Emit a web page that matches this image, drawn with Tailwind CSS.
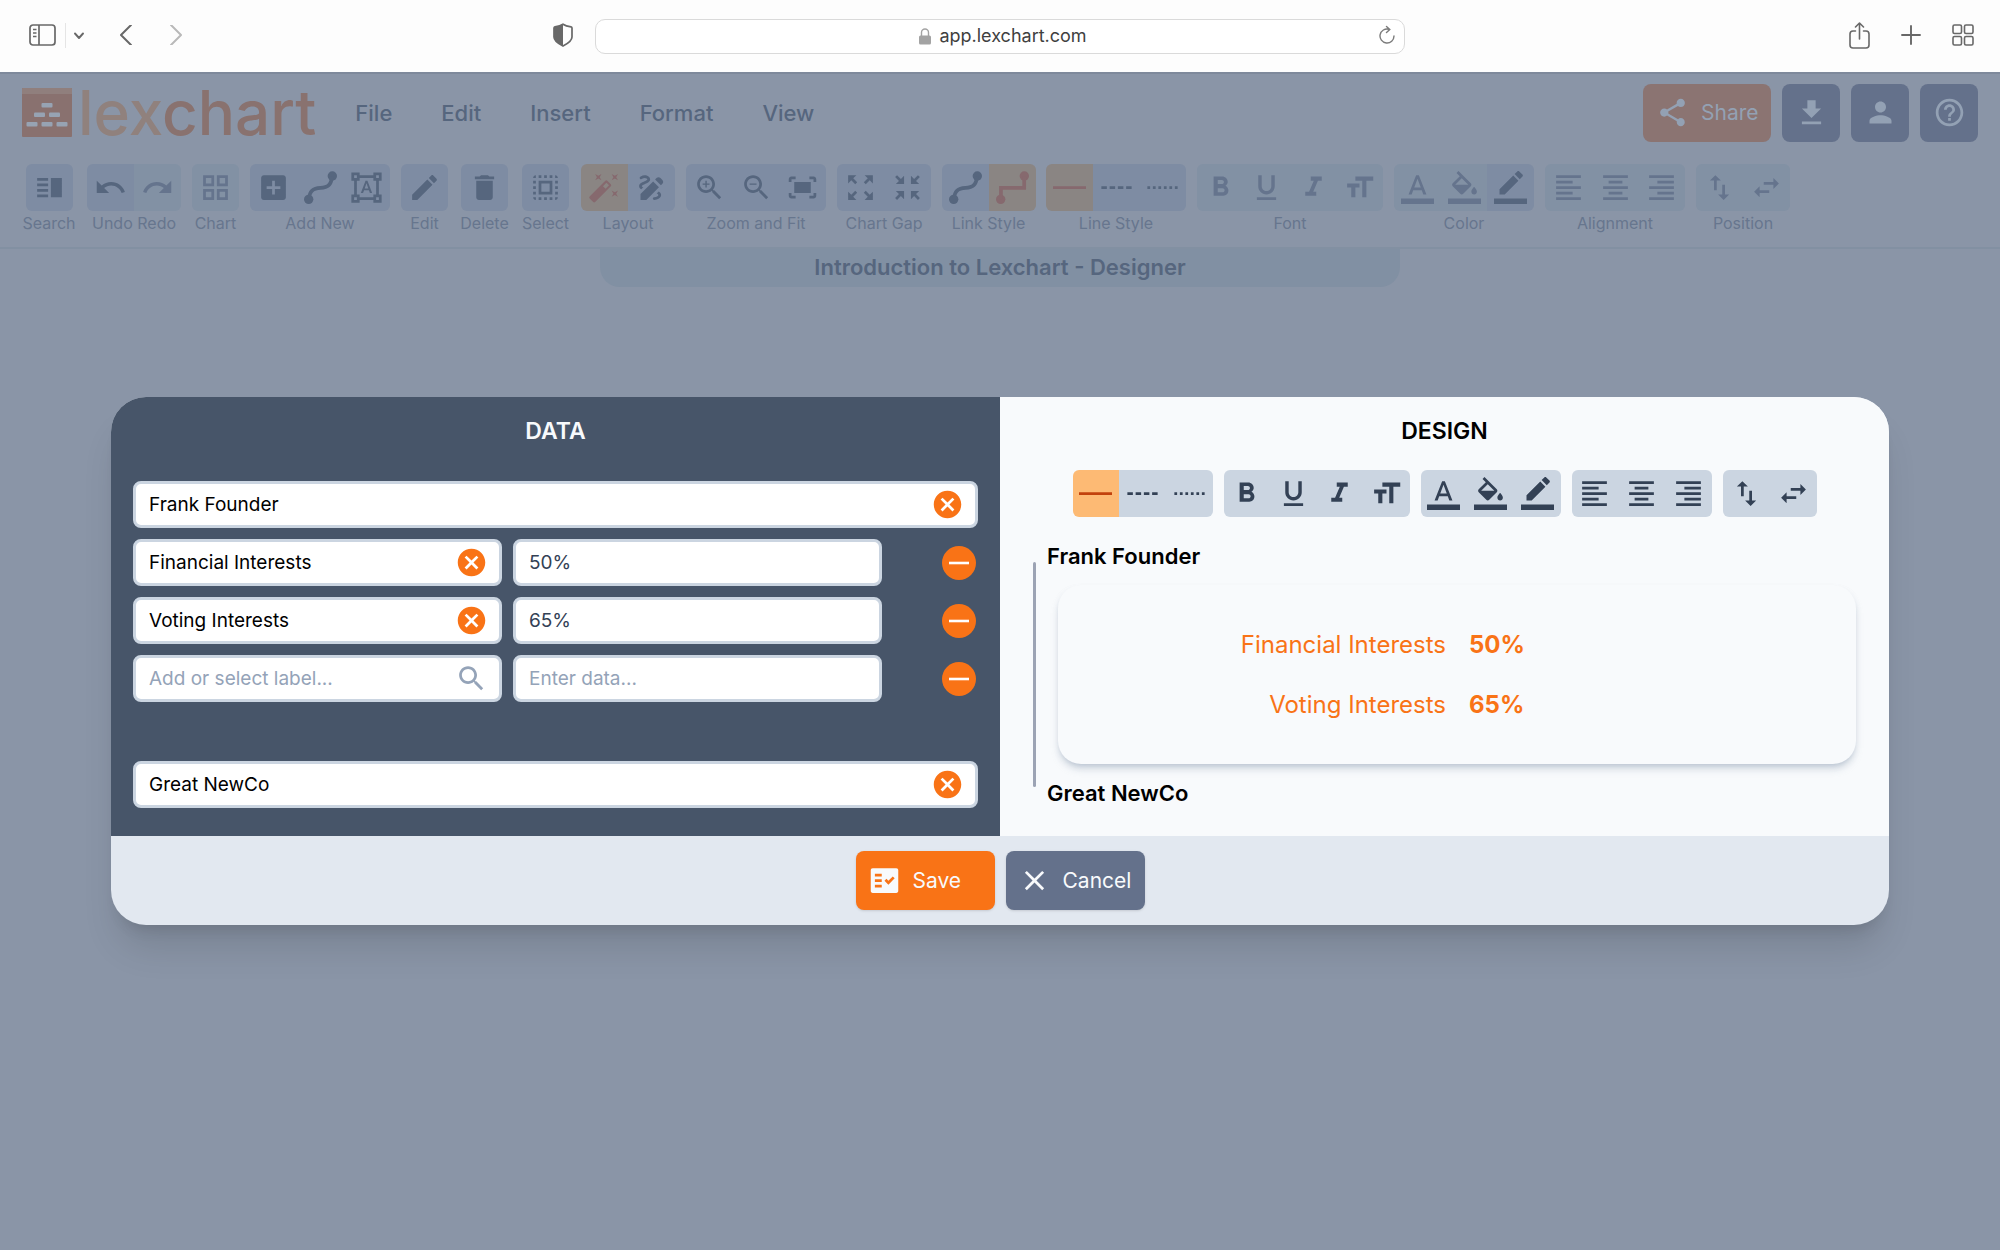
<!DOCTYPE html>
<html lang="en">
<head>
<meta charset="utf-8">
<meta name="viewport" content="width=device-width, initial-scale=1">
<title>Lexchart</title>
<script src="https://cdn.jsdelivr.net/npm/@tailwindcss/browser@4"></script>
</head>
<body class="flex min-h-screen flex-col bg-[#8a95a7] font-['Inter',sans-serif] text-black">

<!-- Icon set -->
<svg class="hidden" aria-hidden="true">
  <symbol id="i-search" viewBox="0 0 24 24"><path d="M3 15h8v-2H3v2zm0 4h8v-2H3v2zm0-8h8V9H3v2zm0-6v2h8V5H3zm10 0h8v14h-8V5z"/></symbol>
  <symbol id="i-undo" viewBox="0 0 24 24"><path d="M12.5 8c-2.65 0-5.05.99-6.9 2.6L2 7v9h9l-3.62-3.62c1.39-1.16 3.16-1.88 5.12-1.88 3.54 0 6.55 2.31 7.6 5.5l2.37-.78C21.08 11.03 17.15 8 12.5 8z"/></symbol>
  <symbol id="i-redo" viewBox="0 0 24 24"><path d="M18.4 10.6C16.55 8.99 14.15 8 11.5 8c-4.65 0-8.58 3.03-9.96 7.22L3.9 16c1.05-3.19 4.05-5.5 7.6-5.5 1.95 0 3.73.72 5.12 1.88L13 16h9V7l-3.6 3.6z"/></symbol>
  <symbol id="i-grid" viewBox="0 0 24 24"><path d="M3 3v8h8V3H3zm6 6H5V5h4v4zm-6 4v8h8v-8H3zm6 6H5v-4h4v4zm4-16v8h8V3h-8zm6 6h-4V5h4v4zm-6 4v8h8v-8h-8zm6 6h-4v-4h4v4z"/></symbol>
  <symbol id="i-addbox" viewBox="0 0 24 24"><path d="M19 3H5c-1.11 0-2 .9-2 2v14c0 1.1.89 2 2 2h14c1.1 0 2-.9 2-2V5c0-1.1-.9-2-2-2zm-2 10h-4v4h-2v-4H7v-2h4V7h2v4h4v2z"/></symbol>
  <symbol id="i-curve" viewBox="0 0 24 24"><circle cx="20.6" cy="3.6" r="3.4"/><circle cx="3.4" cy="20.6" r="3.4"/><path d="M3.6 20.5C4 14.5 6.5 12.6 12 12.3S19.8 10 20.4 4" fill="none" stroke="currentColor" stroke-width="2.7"/></symbol>
  <symbol id="i-elbow" viewBox="0 0 24 24"><circle cx="20.6" cy="3.6" r="3.4"/><circle cx="3.4" cy="20.6" r="3.4"/><path d="M3.6 20.5V12.2H20.5V4" fill="none" stroke="currentColor" stroke-width="2.7"/></symbol>
  <symbol id="i-shapes" viewBox="0 0 24 24"><path d="M23 7V1h-6v2H7V1H1v6h2v10H1v6h6v-2h10v2h6v-6h-2V7h2zM3 3h2v2H3V3zm2 18H3v-2h2v2zm12-2H7v-2H5V7h2V5h10v2h2v10h-2v2zm4 2h-2v-2h2v2zM19 5V3h2v2h-2zm-5.27 9h-3.49l-.73 2H7.89l3.4-9h1.4l3.41 9h-1.63l-.74-2zm-3.04-1.26h2.61L12 8.91l-1.31 3.83z"/></symbol>
  <symbol id="i-edit" viewBox="0 0 24 24"><path d="M3 17.25V21h3.75L17.81 9.94l-3.75-3.75L3 17.25zM20.71 7.04c.39-.39.39-1.02 0-1.41l-2.34-2.34c-.39-.39-1.02-.39-1.41 0l-1.83 1.83 3.75 3.75 1.83-1.83z"/></symbol>
  <symbol id="i-delete" viewBox="0 0 24 24"><path d="M6 19c0 1.1.9 2 2 2h8c1.1 0 2-.9 2-2V7H6v12zM19 4h-3.5l-1-1h-5l-1 1H5v2h14V4z"/></symbol>
  <symbol id="i-select" viewBox="0 0 24 24"><path d="M3 5h2V3c-1.1 0-2 .9-2 2zm0 8h2v-2H3v2zm4 8h2v-2H7v2zM3 9h2V7H3v2zm10-6h-2v2h2V3zm6 0v2h2c0-1.1-.9-2-2-2zM5 21v-2H3c0 1.1.9 2 2 2zm-2-4h2v-2H3v2zM9 3H7v2h2V3zm2 18h2v-2h-2v2zm8-8h2v-2h-2v2zm0 8c1.1 0 2-.9 2-2h-2v2zm0-12h2V7h-2v2zm0 8h2v-2h-2v2zm-4 4h2v-2h-2v2zm0-16h2V3h-2v2zM7 17h10V7H7v10zm2-8h6v6H9V9z"/></symbol>
  <symbol id="i-wand" viewBox="0 0 24 24"><path fill-rule="evenodd" d="M12.6 7.1a1 1 0 0 1 1.4 0l2.6 2.6a1 1 0 0 1 0 1.4L5.2 22.6a1 1 0 0 1-1.4 0L1.2 20a1 1 0 0 1 0-1.4zM13.4 8.5l-2.5 2.5 1.9 1.9 2.5-2.5z"/><path d="M5.2 2.2l2.3 1.3 2.3-1.3-1.3 2.3 1.3 2.3-2.3-1.3-2.3 1.3 1.3-2.3zM17.2 2.2l2.3 1.3 2.3-1.3-1.3 2.3 1.3 2.3-2.3-1.3-2.3 1.3 1.3-2.3zM17.2 14.2l2.3 1.3 2.3-1.3-1.3 2.3 1.3 2.3-2.3-1.3-2.3 1.3 1.3-2.3z"/></symbol>
  <symbol id="i-draw" viewBox="0 0 24 24"><path d="M18.85 10.39l1.06-1.06c.78-.78.78-2.05 0-2.83L18.5 5.09c-.78-.78-2.05-.78-2.83 0l-1.06 1.06 4.24 4.24zM13.19 7.56L4 16.76V21h4.24l9.19-9.19-4.24-4.25zM19 17.5c0 2.19-2.54 3.5-5 3.5-.55 0-1-.45-1-1s.45-1 1-1c1.54 0 3-.73 3-1.5 0-.47-.48-.87-1.23-1.2l1.48-1.48C18.32 15.45 19 16.29 19 17.5zM4.58 13.35C3.61 12.79 3 12.06 3 11c0-1.8 1.89-2.63 3.56-3.36C7.59 7.18 9 6.56 9 6c0-.41-.78-1-2-1-1.26 0-1.8.61-1.83.64-.35.41-.98.46-1.4.12-.41-.34-.49-.95-.15-1.38C3.73 4.24 4.76 3 7 3s4 1.32 4 3c0 1.87-1.93 2.72-3.64 3.47C6.42 9.88 5 10.5 5 11c0 .31.43.6 1.07.86l-1.49 1.49z"/></symbol>
  <symbol id="i-lens" viewBox="0 0 24 24"><path d="M15.5 14h-.79l-.28-.27C15.41 12.59 16 11.11 16 9.5 16 5.91 13.09 3 9.5 3S3 5.91 3 9.5 5.91 16 9.5 16c1.61 0 3.09-.59 4.23-1.57l.27.28v.79l5 4.99L20.49 19l-4.99-5zm-6 0C7.01 14 5 11.99 5 9.5S7.01 5 9.5 5 14 7.01 14 9.5 11.99 14 9.5 14z"/></symbol>
  <symbol id="i-zoomin" viewBox="0 0 24 24"><use href="#i-lens"/><path d="M12 10h-2v2H9v-2H7V9h2V7h1v2h2v1z"/></symbol>
  <symbol id="i-zoomout" viewBox="0 0 24 24"><use href="#i-lens"/><path d="M7 9h5v1H7z"/></symbol>
  <symbol id="i-fit" viewBox="0 0 24 24"><path d="M17 4h3c1.1 0 2 .9 2 2v2h-2V6h-3V4zM4 8V6h3V4H4c-1.1 0-2 .9-2 2v2h2zm16 8v2h-3v2h3c1.1 0 2-.9 2-2v-2h-2zM7 18H4v-2H2v2c0 1.1.9 2 2 2h3v-2zM18 8H6v8h12V8z"/></symbol>
  <symbol id="i-expand" viewBox="0 0 24 24"><path d="M15 3l2.3 2.3-2.89 2.87 1.42 1.42L18.7 6.7 21 9V3zM3 9l2.3-2.3 2.87 2.89 1.42-1.42L6.7 5.3 9 3H3zm6 12l-2.3-2.3 2.89-2.87-1.42-1.42L5.3 17.3 3 15v6zm12-6l-2.3 2.3-2.87-2.89-1.42 1.42 2.89 2.87L15 21h6z"/></symbol>
  <symbol id="i-shrink" viewBox="0 0 24 24"><path d="M9.5 9.5v-6l-2.3 2.3L4.4 3 3 4.4l2.8 2.8-2.3 2.3zM20.5 9.5l-2.3-2.3L21 4.4 19.6 3l-2.8 2.8-2.3-2.3v6zM3.5 14.5l2.3 2.3L3 19.6 4.4 21l2.8-2.8 2.3 2.3v-6zM14.5 14.5v6l2.3-2.3 2.8 2.8 1.4-1.4-2.8-2.8 2.3-2.3z"/></symbol>
  <symbol id="i-solid" viewBox="0 0 24 24"><path d="M0 11h24v2H0z"/></symbol>
  <symbol id="i-dash" viewBox="0 0 24 24"><path d="M1 11h4v2H1zM7 11h4v2H7zM13 11h4v2h-4zM19 11h4v2h-4z"/></symbol>
  <symbol id="i-dot" viewBox="0 0 24 24"><path d="M1 11h2v2H1zM5 11h2v2H5zM9 11h2v2H9zM13 11h2v2h-2zM17 11h2v2h-2zM21 11h2v2h-2z"/></symbol>
  <symbol id="i-bold" viewBox="0 0 24 24"><path d="M15.6 10.79c.97-.67 1.65-1.77 1.65-2.79 0-2.26-1.75-4-4-4H7v14h7.04c2.09 0 3.71-1.7 3.71-3.79 0-1.52-.86-2.82-2.15-3.42zM10 6.5h3c.83 0 1.5.67 1.5 1.5s-.67 1.5-1.5 1.5h-3v-3zm3.5 9H10v-3h3.5c.83 0 1.5.67 1.5 1.5s-.67 1.5-1.5 1.5z"/></symbol>
  <symbol id="i-under" viewBox="0 0 24 24"><path d="M12 17c3.31 0 6-2.69 6-6V3h-2.5v8c0 1.93-1.57 3.5-3.5 3.5S8.5 12.93 8.5 11V3H6v8c0 3.31 2.69 6 6 6zm-7 2v2h14v-2H5z"/></symbol>
  <symbol id="i-italic" viewBox="0 0 24 24"><path d="M10 4v3h2.21l-3.42 8H6v3h8v-3h-2.21l3.42-8H18V4z"/></symbol>
  <symbol id="i-size" viewBox="0 0 24 24"><path d="M9 4v3h5v12h3V7h5V4H9zm-6 8h3v7h3v-7h3V9H3v3z"/></symbol>
  <symbol id="i-color" viewBox="0 0 24 24"><path d="M0 20h24v4H0zM11 3L5.5 17h2.25l1.12-3h6.25l1.12 3h2.25L13 3h-2zm-1.38 9L12 5.67 14.38 12H9.62z"/></symbol>
  <symbol id="i-fill" viewBox="0 0 24 24"><path d="M0 20h24v4H0zM16.56 8.94L7.62 0 6.21 1.41l2.38 2.38-5.15 5.15c-.59.59-.59 1.54 0 2.12l5.5 5.5c.29.29.68.44 1.06.44s.77-.15 1.06-.44l5.5-5.5c.59-.58.59-1.53 0-2.12zM5.21 10L10 5.21 14.79 10H5.21zM19 11.5s-2 2.17-2 3.5c0 1.1.9 2 2 2s2-.9 2-2c0-1.33-2-3.5-2-3.5z"/></symbol>
  <symbol id="i-border" viewBox="0 0 24 24"><path d="M0 20h24v4H0zM17.75 7L14 3.25l-10 10V17h3.75l10-10zm2.96-2.96c.39-.39.39-1.02 0-1.41L18.37.29c-.39-.39-1.02-.39-1.41 0L15 2.25 18.75 6l1.96-1.96z"/></symbol>
  <symbol id="i-left" viewBox="0 0 24 24"><path d="M15 15H3v2h12v-2zm0-8H3v2h12V7zM3 13h18v-2H3v2zm0 8h18v-2H3v2zM3 3v2h18V3H3z"/></symbol>
  <symbol id="i-center" viewBox="0 0 24 24"><path d="M7 15v2h10v-2H7zm-4 6h18v-2H3v2zm0-8h18v-2H3v2zm4-6v2h10V7H7zM3 3v2h18V3H3z"/></symbol>
  <symbol id="i-right" viewBox="0 0 24 24"><path d="M3 21h18v-2H3v2zm6-4h12v-2H9v2zm-6-4h18v-2H3v2zm6-4h12V7H9v2zM3 3v2h18V3H3z"/></symbol>
  <symbol id="i-vert" viewBox="0 0 24 24"><path d="M16 17.01V10h-2v7.01h-3L15 21l4-3.99h-3zM9 3L5 6.99h3V14h2V6.99h3L9 3z"/></symbol>
  <symbol id="i-horiz" viewBox="0 0 24 24"><path d="M6.99 11L3 15l3.99 4v-3H14v-2H6.99v-3zM21 9l-3.99-4v3H10v2h7.01v3L21 9z"/></symbol>
  <symbol id="i-share" viewBox="0 0 24 24"><path d="M18 16.08c-.76 0-1.44.3-1.96.77L8.91 12.7c.05-.23.09-.46.09-.7s-.04-.47-.09-.7l7.05-4.11c.54.5 1.25.81 2.04.81 1.66 0 3-1.34 3-3s-1.34-3-3-3-3 1.34-3 3c0 .24.04.47.09.7L8.04 9.81C7.5 9.31 6.79 9 6 9c-1.66 0-3 1.34-3 3s1.34 3 3 3c.79 0 1.5-.31 2.04-.81l7.12 4.16c-.05.21-.08.43-.08.65 0 1.61 1.31 2.92 2.92 2.92s2.92-1.31 2.92-2.92-1.31-2.92-2.92-2.92z"/></symbol>
  <symbol id="i-download" viewBox="0 0 24 24"><path d="M5 20.5h14v-2H5v2zM19 9h-4V3H9v6H5l7 7 7-7z"/></symbol>
  <symbol id="i-person" viewBox="0 0 24 24"><path d="M12 12c2.21 0 4-1.79 4-4s-1.79-4-4-4-4 1.79-4 4 1.79 4 4 4zm0 2c-2.67 0-8 1.34-8 4v2h16v-2c0-2.66-5.33-4-8-4z"/></symbol>
  <symbol id="i-help" viewBox="0 0 24 24"><path d="M11 18h2v-2h-2v2zm1-16C6.48 2 2 6.48 2 12s4.48 10 10 10 10-4.48 10-10S17.52 2 12 2zm0 18c-4.41 0-8-3.59-8-8s3.59-8 8-8 8 3.59 8 8-3.59 8-8 8zm0-14c-2.21 0-4 1.79-4 4h2c0-1.1.9-2 2-2s2 .9 2 2c0 2-3 1.75-3 5h2c0-2.25 3-2.5 3-5 0-2.21-1.79-4-4-4z"/></symbol>
  <symbol id="i-clear" viewBox="0 0 24 24"><path d="M12 2C6.47 2 2 6.47 2 12s4.47 10 10 10 10-4.47 10-10S17.53 2 12 2zm5 13.59L15.59 17 12 13.41 8.41 17 7 15.59 10.59 12 7 8.41 8.41 7 12 10.59 15.59 7 17 8.41 13.41 12 17 15.59z"/></symbol>
  <symbol id="i-minus" viewBox="0 0 34 34"><circle cx="17" cy="17" r="17"/><path d="M7 15.7h20v2.6H7z" fill="#fff"/></symbol>
  <symbol id="i-save" viewBox="0 0 24 24"><path fill-rule="evenodd" d="M20.5 3h-17C2.5 3 2 3.5 2 4.5v15c0 1 .5 1.5 1.5 1.5h17c1 0 1.5-.5 1.5-1.5v-15c0-1-.5-1.5-1.5-1.5zM10 17H5v-2h5v2zm0-4H5v-2h5v2zm0-4H5V7h5v2zm4.82 6L12 12.16l1.41-1.41 1.41 1.42L17.99 9l1.42 1.42L14.82 15z"/></symbol>
  <symbol id="i-close" viewBox="0 0 24 24"><path d="M19 6.41L17.59 5 12 10.59 6.41 5 5 6.41 10.59 12 5 17.59 6.41 19 12 13.41 17.59 19 19 17.59 13.41 12z"/></symbol>
</svg>

<!-- Browser chrome -->
<div class="grid h-[72px] shrink-0 grid-cols-[1fr_810px_1fr] items-center bg-[#fdfdfd] text-[#686868]">
  <div class="flex items-center pb-[2px] pr-[22px] pl-[29px]">
    <button aria-label="Sidebar"><svg class="h-[22px] w-[27px]" viewBox="0 0 27 22" fill="none" stroke="currentColor" stroke-width="1.7"><rect x="1" y="1" width="25" height="20" rx="3"/><path d="M10 1v20"/><path d="M4 5.5h3.5M4 9h3.5M4 12.5h3.5" stroke-width="1.3"/></svg></button>
    <span class="ml-[9px] h-[25px] w-px bg-[#e5e5e5]"></span>
    <button class="ml-[8px]" aria-label="Tab groups"><svg class="h-[12px] w-[10px]" viewBox="0 0 10 12" fill="none" stroke="currentColor" stroke-width="1.9" stroke-linecap="round" stroke-linejoin="round"><path d="M1 4.5l4 4.5 4-4.5"/></svg></button>
    <button class="ml-[36px]" aria-label="Back"><svg class="h-[20px] w-[12px]" viewBox="0 0 12 20" fill="none" stroke="currentColor" stroke-width="2" stroke-linecap="round" stroke-linejoin="round"><path d="M11 0L1 10l10 10"/></svg></button>
    <button class="ml-[38px] text-[#b9b9b9]" aria-label="Forward"><svg class="h-[20px] w-[12px]" viewBox="0 0 12 20" fill="none" stroke="currentColor" stroke-width="2" stroke-linecap="round" stroke-linejoin="round"><path d="M1 0l10 10L1 20"/></svg></button>
    <button class="ml-auto" aria-label="Privacy report"><svg class="h-[24px] w-[20px]" viewBox="0 0 20 24"><path d="M10 1.2C12 2.6 15 3.4 18 3.8c.7.2 1 .6 1 1.2v9c0 4-4 6.5-9 9-5-2.5-9-5-9-9V5c0-.6.3-1 1-1.2C5 3.4 8 2.6 10 1.2z" fill="none" stroke="currentColor" stroke-width="1.7"/><path d="M10 1v22c-5-2.5-9-5-9-9V5c0-.6.3-1 1-1.2C5 3.4 8 2.6 10 1z" fill="currentColor"/></svg></button>
  </div>
  <div class="flex h-[35px] items-center rounded-[10px] border border-[#dadada] bg-white pr-[9px] pl-[31px]">
    <div class="flex flex-1 items-center justify-center gap-[8px]">
      <svg class="h-[17px] w-[12px]" viewBox="0 0 12 17" aria-hidden="true"><path d="M2.5 8V4.5a3.5 3.5 0 0 1 7 0V8" fill="none" stroke="#a3a3a3" stroke-width="1.4"/><rect y="7.5" width="12" height="9" rx="1.5" fill="#a3a3a3"/></svg>
      <span class="text-[18px] leading-[24px] text-[#3f3f3f]">app.lexchart.com</span>
    </div>
    <button class="pb-[2px]" aria-label="Reload"><svg class="h-[20px] w-[16px]" viewBox="0 0 16 20" fill="none" stroke="#7b7b7b" stroke-width="1.4" stroke-linecap="round"><path d="M15 11a7 7 0 1 1-5-6.700M7.500 1.500l3.300 3-3.300 3"/></svg></button>
  </div>
  <div class="flex items-center justify-end gap-[31px] pr-[26px] pb-[2px]">
    <button aria-label="Share page"><svg class="h-[27px] w-[21px]" viewBox="0 0 21 27" fill="none" stroke="currentColor" stroke-width="1.6" stroke-linecap="round" stroke-linejoin="round"><path d="M6.500 9H4a3 3 0 0 0-3 3v11a3 3 0 0 0 3 3h13a3 3 0 0 0 3-3V12a3 3 0 0 0-3-3h-2.500M10.500 17V1.500M6.500 5l4-4 4 4"/></svg></button>
    <button aria-label="New tab"><svg class="h-[20px] w-[20px]" viewBox="0 0 20 20" fill="none" stroke="currentColor" stroke-width="1.9" stroke-linecap="round"><path d="M10 1v18M1 10h18"/></svg></button>
    <button aria-label="Tab overview"><svg class="h-[22px] w-[22px]" viewBox="0 0 22 22" fill="none" stroke="currentColor" stroke-width="1.6"><rect x="1" y="1" width="8.500" height="8.500" rx="1.500"/><rect x="12.500" y="1" width="8.500" height="8.500" rx="1.500"/><rect x="1" y="12.500" width="8.500" height="8.500" rx="1.500"/><rect x="12.500" y="12.500" width="8.500" height="8.500" rx="1.500"/></svg></button>
  </div>
</div>

<div class="relative flex flex-1 flex-col">
  <header class="flex flex-col border-t-2 border-b-2 border-t-[#7e899b] border-b-[#8290a2] px-[22px] pb-[12px] pt-[9px]">
    <div class="flex h-[59px] items-center">
      <a href="#" class="flex items-center gap-[6px]" aria-label="Lexchart home">
        <svg class="h-[49px] w-[50px]" viewBox="0 0 50 49" aria-hidden="true"><rect width="50" height="49" rx="1" fill="#89716f"/><path d="M0 1a1 1 0 0 1 1-1h48a1 1 0 0 1 1 1v5H0z" fill="#907f7d"/><g fill="#97a3b3"><rect x="19.500" y="15" width="11" height="4.500" rx="1"/><rect x="12" y="24.500" width="11" height="4.500" rx="1"/><rect x="27" y="24.500" width="11" height="4.500" rx="1"/><rect x="4.500" y="34" width="11" height="4.500" rx="1"/><rect x="19.500" y="34" width="11" height="4.500" rx="1"/><rect x="34.500" y="34" width="11" height="4.500" rx="1"/></g></svg>
        <span class="text-[62px] leading-[59px] font-medium text-[#89726f]"><span class="text-[#90817d]">lex</span>chart</span>
      </a>
      <nav class="ml-[39px] flex gap-[49px] text-[22px] leading-[30px] font-medium text-[#56667e]">
        <a href="#">File</a><a href="#">Edit</a><a href="#">Insert</a><a href="#">Format</a><a href="#">View</a>
      </nav>
      <div class="ml-auto flex gap-[11px] text-[#93a1b4]">
        <button class="flex h-[58px] w-[128px] items-center gap-[12px] rounded-[8px] bg-[#8b7472] pl-[13px] text-[21px]"><svg class="h-[33px] w-[33px] fill-current"><use href="#i-share"/></svg>Share</button>
        <button class="flex h-[58px] w-[58px] items-center justify-center rounded-[8px] bg-[#64718b]" aria-label="Download"><svg class="h-[33px] w-[33px] fill-current"><use href="#i-download"/></svg></button>
        <button class="flex h-[58px] w-[58px] items-center justify-center rounded-[8px] bg-[#64718b]" aria-label="Account"><svg class="h-[33px] w-[33px] fill-current"><use href="#i-person"/></svg></button>
        <button class="flex h-[58px] w-[58px] items-center justify-center rounded-[8px] bg-[#64718b]" aria-label="Help"><svg class="h-[33px] w-[33px] fill-current"><use href="#i-help"/></svg></button>
      </div>
    </div>

    <div id="toolbar" class="mt-[22px] flex gap-[11px] text-[16px] leading-[24px] whitespace-nowrap text-[#67768e]"></div>
  </header>

  <div class="mx-auto flex h-[38px] w-2/5 items-center justify-center rounded-b-[20px] bg-[#8190a3] pb-[2px] text-[22px] leading-[30px] font-semibold text-[#56667e]">Introduction to Lexchart - Designer</div>

  <!-- Modal -->
  <div class="absolute inset-0 flex items-center justify-center px-[111px]">
    <section role="dialog" aria-label="Edit link" class="w-full overflow-hidden rounded-[35px] bg-[#e2e8f0] shadow-[0_29px_36px_-7px_rgb(0_0_0/0.12),0_12px_15px_-9px_rgb(0_0_0/0.12)]">
      <div class="grid grid-cols-2">
        <div class="bg-[#475569] px-[22px] pt-[19px] pb-[28px]">
          <h2 class="text-center text-[23px] leading-[30px] font-semibold text-[#f8fafc]">DATA</h2>
          <div class="mt-[35px] flex flex-col gap-[11px]">
            <div class="relative">
              <input aria-label="Source" value="Frank Founder" class="block h-[47px] w-full rounded-[8px] border-[3px] border-[#cbd5e1] bg-white px-[13px] text-[19px]">
              <button class="absolute top-[7px] right-[14px] text-[#f97316]" aria-label="Clear source"><svg class="h-[33px] w-[33px] fill-current"><use href="#i-clear"/></svg></button>
            </div>
            <div class="grid grid-cols-[1fr_1fr_85px] items-center gap-[11px]">
              <div class="relative">
                <input aria-label="Label 1" value="Financial Interests" class="block h-[47px] w-full rounded-[8px] border-[3px] border-[#cbd5e1] bg-white px-[13px] text-[19px]">
                <button class="absolute top-[7px] right-[14px] text-[#f97316]" aria-label="Clear label 1"><svg class="h-[33px] w-[33px] fill-current"><use href="#i-clear"/></svg></button>
              </div>
              <input aria-label="Data 1" value="50%" class="block h-[47px] w-full rounded-[8px] border-[3px] border-[#cbd5e1] bg-white px-[13px] text-[19px] text-[#334155]">
              <button class="justify-self-end pr-[2px] text-[#f97316]" aria-label="Remove row 1"><svg class="h-[34px] w-[34px] fill-current"><use href="#i-minus"/></svg></button>
            </div>
            <div class="grid grid-cols-[1fr_1fr_85px] items-center gap-[11px]">
              <div class="relative">
                <input aria-label="Label 2" value="Voting Interests" class="block h-[47px] w-full rounded-[8px] border-[3px] border-[#cbd5e1] bg-white px-[13px] text-[19px]">
                <button class="absolute top-[7px] right-[14px] text-[#f97316]" aria-label="Clear label 2"><svg class="h-[33px] w-[33px] fill-current"><use href="#i-clear"/></svg></button>
              </div>
              <input aria-label="Data 2" value="65%" class="block h-[47px] w-full rounded-[8px] border-[3px] border-[#cbd5e1] bg-white px-[13px] text-[19px] text-[#334155]">
              <button class="justify-self-end pr-[2px] text-[#f97316]" aria-label="Remove row 2"><svg class="h-[34px] w-[34px] fill-current"><use href="#i-minus"/></svg></button>
            </div>
            <div class="grid grid-cols-[1fr_1fr_85px] items-center gap-[11px]">
              <div class="relative">
                <input aria-label="Label 3" placeholder="Add or select label..." class="block h-[47px] w-full rounded-[8px] border-[3px] border-[#cbd5e1] bg-white px-[13px] text-[19px] placeholder:text-[#94a3b8]">
                <button class="absolute top-[7px] right-[14px] text-[#94a3b8]" aria-label="Find label"><svg class="h-[33px] w-[33px] fill-current"><use href="#i-lens"/></svg></button>
              </div>
              <input aria-label="Data 3" placeholder="Enter data..." class="block h-[47px] w-full rounded-[8px] border-[3px] border-[#cbd5e1] bg-white px-[13px] text-[19px] placeholder:text-[#94a3b8]">
              <button class="justify-self-end pr-[2px] text-[#f97316]" aria-label="Remove row 3"><svg class="h-[34px] w-[34px] fill-current"><use href="#i-minus"/></svg></button>
            </div>
            <div class="relative mt-[48px]">
              <input aria-label="Target" value="Great NewCo" class="block h-[47px] w-full rounded-[8px] border-[3px] border-[#cbd5e1] bg-white px-[13px] text-[19px]">
              <button class="absolute top-[7px] right-[14px] text-[#f97316]" aria-label="Clear target"><svg class="h-[33px] w-[33px] fill-current"><use href="#i-clear"/></svg></button>
            </div>
          </div>
        </div>

        <div class="flex flex-col bg-[#f8fafc] px-[33px] pt-[19px] pb-[28px]">
          <h2 class="text-center text-[23px] leading-[30px] font-semibold">DESIGN</h2>
          <div id="design-bar" class="mt-[24px] flex justify-center gap-[11px] text-[#334155]"></div>
          <div class="mt-[24px] flex gap-[11px]">
            <div class="my-[21px] w-[3px] rounded-full bg-[#9ca3b4]"></div>
            <div class="flex-1">
              <h3 class="text-[22px] leading-[30px] font-semibold">Frank Founder</h3>
              <div class="mt-[14px] mb-[14px] ml-[11px] rounded-[23px] pt-[45px] pb-[44px] text-[24px] leading-[30px] text-[#f97316] shadow-[0_6px_9px_-2px_rgb(148_163_184/0.45),0_3px_6px_-3px_rgb(148_163_184/0.5)]">
                <dl class="grid grid-cols-[388fr_410fr] gap-y-[30px]">
                  <dt class="text-right">Financial Interests</dt><dd class="pl-[23px] font-bold">50%</dd>
                  <dt class="text-right">Voting Interests</dt><dd class="pl-[23px] font-bold">65%</dd>
                </dl>
              </div>
              <h3 class="text-[22px] leading-[30px] font-semibold">Great NewCo</h3>
            </div>
          </div>
        </div>
      </div>

      <div class="flex justify-center gap-[11px] px-[22px] py-[15px] text-[21px] text-[#f8fafc]">
        <button class="flex h-[59px] w-[139px] items-center gap-[12px] rounded-[8px] bg-[#f97316] pl-[12px] shadow-sm"><svg class="h-[33px] w-[33px] fill-current"><use href="#i-save"/></svg>Save</button>
        <button class="flex h-[59px] w-[139px] items-center gap-[12px] rounded-[8px] bg-[#64718b] pl-[12px] shadow-sm"><svg class="h-[33px] w-[33px] fill-current"><use href="#i-close"/></svg>Cancel</button>
      </div>
    </section>
  </div>
</div>

<script>
  // Cell states: n = enabled, d = disabled, a = active
  const dim = {
    n: 'bg-[#7e8ca3] text-[#56667e]',
    d: 'bg-[#8291a4] text-[#65748d]',
    a: 'bg-[#8a8583] text-[#86696e]'
  };
  const lit = {
    n: 'bg-[#cbd5e1] text-[#334155]',
    a: 'bg-[#fdba74] text-[#c2410c]'
  };
  const cell = (tone, [icon, state]) =>
    `<button class="flex h-[47px] flex-1 items-center justify-center ${tone[state]}" aria-label="${icon}"><svg class="h-[33px] w-[33px] fill-current"><use href="#i-${icon}"/></svg></button>`;
  const parse = s => s.split(' ').map(c => c.split(':'));
  const bar = {1: 'w-[47px]', 2: 'w-[94px]', 3: 'w-[140px]', 4: 'w-[186px]'};
  const strip = (tone, s) => {
    const cells = parse(s);
    return `<div class="flex overflow-hidden rounded-[6px] ${bar[cells.length]}">${cells.map(c => cell(tone, c)).join('')}</div>`;
  };

  const groups = [
    ['Search', 'search:n', 'w-[54px]'],
    ['Undo Redo', 'undo:n redo:d', 'w-[94px]'],
    ['Chart', 'grid:d', 'w-[47px]'],
    ['Add New', 'addbox:n curve:n shapes:n', 'w-[140px]'],
    ['Edit', 'edit:n', 'w-[47px]'],
    ['Delete', 'delete:n', 'w-[51px]'],
    ['Select', 'select:n', 'w-[49px]'],
    ['Layout', 'wand:a draw:n', 'w-[94px]'],
    ['Zoom and Fit', 'zoomin:n zoomout:n fit:n', 'w-[140px]'],
    ['Chart Gap', 'expand:n shrink:n', 'w-[94px]'],
    ['Link Style', 'curve:n elbow:a', 'w-[93px]'],
    ['Line Style', 'solid:a dash:n dot:n', 'w-[140px]'],
    ['Font', 'bold:d under:d italic:d size:d', 'w-[186px]'],
    ['Color', 'color:d fill:d border:n', 'w-[140px]'],
    ['Alignment', 'left:d center:d right:d', 'w-[140px]'],
    ['Position', 'vert:d horiz:d', 'w-[94px]']
  ];
  document.getElementById('toolbar').innerHTML = groups.map(([label, cells, width]) =>
    `<div class="flex shrink-0 flex-col items-center ${width}">${strip(dim, cells)}<span>${label}</span></div>`).join('');

  document.getElementById('design-bar').innerHTML = [
    'solid:a dash:n dot:n', 'bold:n under:n italic:n size:n', 'color:n fill:n border:n', 'left:n center:n right:n', 'vert:n horiz:n'
  ].map(s => strip(lit, s)).join('');
</script>
</body>
</html>
